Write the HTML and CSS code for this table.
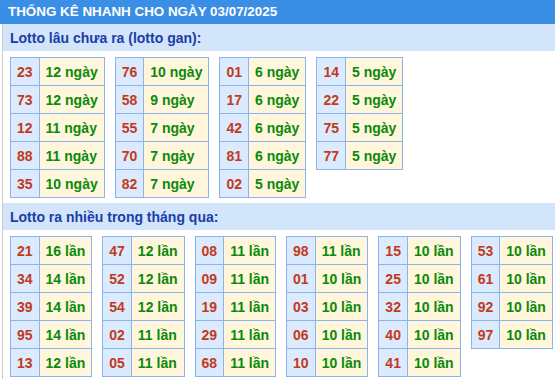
FILE: index.html
```html
<!DOCTYPE html>
<html lang="vi">
<head>
<meta charset="utf-8">
<title>Thống kê nhanh</title>
<link rel="stylesheet" href="styles.css">
</head>
<body>
<div class="header">THỐNG KÊ NHANH CHO NGÀY 03/07/2025</div>
<div class="box">
  <div class="sub">Lotto lâu chưa ra (lotto gan):</div>
  <div class="group">
    <table class="t"><tbody>
      <tr><td class="n">23</td><td class="v">12 ngày</td></tr>
      <tr><td class="n">73</td><td class="v">12 ngày</td></tr>
      <tr><td class="n">12</td><td class="v">11 ngày</td></tr>
      <tr><td class="n">88</td><td class="v">11 ngày</td></tr>
      <tr><td class="n">35</td><td class="v">10 ngày</td></tr>
    </tbody></table>
    <table class="t"><tbody>
      <tr><td class="n">76</td><td class="v">10 ngày</td></tr>
      <tr><td class="n">58</td><td class="v">9 ngày</td></tr>
      <tr><td class="n">55</td><td class="v">7 ngày</td></tr>
      <tr><td class="n">70</td><td class="v">7 ngày</td></tr>
      <tr><td class="n">82</td><td class="v">7 ngày</td></tr>
    </tbody></table>
    <table class="t"><tbody>
      <tr><td class="n">01</td><td class="v">6 ngày</td></tr>
      <tr><td class="n">17</td><td class="v">6 ngày</td></tr>
      <tr><td class="n">42</td><td class="v">6 ngày</td></tr>
      <tr><td class="n">81</td><td class="v">6 ngày</td></tr>
      <tr><td class="n">02</td><td class="v">5 ngày</td></tr>
    </tbody></table>
    <table class="t"><tbody>
      <tr><td class="n">14</td><td class="v">5 ngày</td></tr>
      <tr><td class="n">22</td><td class="v">5 ngày</td></tr>
      <tr><td class="n">75</td><td class="v">5 ngày</td></tr>
      <tr><td class="n">77</td><td class="v">5 ngày</td></tr>
    </tbody></table>
  </div>
  <div class="sub">Lotto ra nhiều trong tháng qua:</div>
  <div class="group">
    <table class="t"><tbody>
      <tr><td class="n">21</td><td class="v">16 lần</td></tr>
      <tr><td class="n">34</td><td class="v">14 lần</td></tr>
      <tr><td class="n">39</td><td class="v">14 lần</td></tr>
      <tr><td class="n">95</td><td class="v">14 lần</td></tr>
      <tr><td class="n">13</td><td class="v">12 lần</td></tr>
    </tbody></table>
    <table class="t"><tbody>
      <tr><td class="n">47</td><td class="v">12 lần</td></tr>
      <tr><td class="n">52</td><td class="v">12 lần</td></tr>
      <tr><td class="n">54</td><td class="v">12 lần</td></tr>
      <tr><td class="n">02</td><td class="v">11 lần</td></tr>
      <tr><td class="n">05</td><td class="v">11 lần</td></tr>
    </tbody></table>
    <table class="t"><tbody>
      <tr><td class="n">08</td><td class="v">11 lần</td></tr>
      <tr><td class="n">09</td><td class="v">11 lần</td></tr>
      <tr><td class="n">19</td><td class="v">11 lần</td></tr>
      <tr><td class="n">29</td><td class="v">11 lần</td></tr>
      <tr><td class="n">68</td><td class="v">11 lần</td></tr>
    </tbody></table>
    <table class="t"><tbody>
      <tr><td class="n">98</td><td class="v">11 lần</td></tr>
      <tr><td class="n">01</td><td class="v">10 lần</td></tr>
      <tr><td class="n">03</td><td class="v">10 lần</td></tr>
      <tr><td class="n">06</td><td class="v">10 lần</td></tr>
      <tr><td class="n">10</td><td class="v">10 lần</td></tr>
    </tbody></table>
    <table class="t"><tbody>
      <tr><td class="n">15</td><td class="v">10 lần</td></tr>
      <tr><td class="n">25</td><td class="v">10 lần</td></tr>
      <tr><td class="n">32</td><td class="v">10 lần</td></tr>
      <tr><td class="n">40</td><td class="v">10 lần</td></tr>
      <tr><td class="n">41</td><td class="v">10 lần</td></tr>
    </tbody></table>
    <table class="t"><tbody>
      <tr><td class="n">53</td><td class="v">10 lần</td></tr>
      <tr><td class="n">61</td><td class="v">10 lần</td></tr>
      <tr><td class="n">92</td><td class="v">10 lần</td></tr>
      <tr><td class="n">97</td><td class="v">10 lần</td></tr>
    </tbody></table>
  </div>
</div>
</body>
</html>
```
FILE: styles.css
```css
html, body {
  margin: 0;
  padding: 0;
  background: #ffffff;
  font-family: "Liberation Sans", Arial, sans-serif;
}
.header {
  height: 24px;
  line-height: 24px;
  background: #3a8ee6;
  color: #ffffff;
  font-weight: bold;
  font-size: 13.4px;
  padding-left: 8px;
  white-space: nowrap;
}
.box {
  margin-left: 2px;
  border-left: 1px solid #c9ccd2;
  min-height: 355px;
}
.sub {
  height: 27px;
  line-height: 28px;
  background: #d2e5fb;
  color: #1a3da8;
  font-weight: bold;
  font-size: 14px;
  padding-left: 7px;
  white-space: nowrap;
}
.group {
  display: flex;
  align-items: flex-start;
  gap: 10px;
  padding: 6px 0 5px 7px;
}
.t {
  border-collapse: collapse;
  font-size: 14px;
  font-weight: bold;
}
.t td {
  border: 1px solid #8ab4f0;
  height: 28px;
  box-sizing: border-box;
  padding: 2px 6px 0 6px;
  line-height: 17px;
  white-space: nowrap;
}
.n {
  background: #dbeafc;
  color: #c23a1c;
  text-align: center;
}
.v {
  background: #fff6dc;
  color: #0a8a0a;
  text-align: left;
}
```
